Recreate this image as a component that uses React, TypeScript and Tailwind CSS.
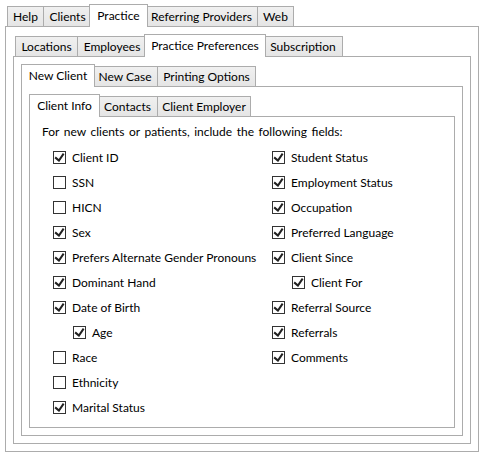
import React from "react";

type TabSpec = { label: string; w: string; sel?: boolean };

function Tabs({ tabs }: { tabs: TabSpec[] }) {
  const base =
    "flex items-center justify-center border-t border-l border-r border-[#ACACAC] text-black whitespace-nowrap shrink-0";
  return (
    <div className="flex items-end h-[22px] pl-[2px] shrink-0">
      {tabs.map((t, i) => {
        const first = i === 0;
        if (t.sel) {
          const m = first ? "ml-[-2px] mr-[-2px]" : "ml-[-3px] mr-[-2px]";
          return (
            <div key={t.label} className={`${base} ${t.w} ${m} h-[23px] -mb-px bg-white relative z-10`}>
              {t.label}
            </div>
          );
        }
        return (
          <div
            key={t.label}
            className={`${base} ${t.w} ${first ? "" : "-ml-px"} h-[20px] bg-linear-to-b from-[#F0F0F0] to-[#E5E5E5]`}
          >
            {t.label}
          </div>
        );
      })}
    </div>
  );
}

function TabControl({ tabs, children }: { tabs: TabSpec[]; children: React.ReactNode }) {
  return (
    <div className="flex flex-col flex-1 min-h-0">
      <Tabs tabs={tabs} />
      <div className="flex-1 min-h-0 flex flex-col border border-[#ACACAC] bg-white p-[7px]">{children}</div>
    </div>
  );
}

function Check({ checked }: { checked: boolean }) {
  return (
    <div className="w-[13px] h-[13px] border border-[#333333] bg-white shrink-0 flex items-center justify-center">
      {checked && (
        <svg width="11" height="11" viewBox="0 0 11 11">
          <path
            transform="translate(0.5 0.95)"
            d="M9.975 1.223L4.698 9.098L4.522 9.098L0 5.193L1.277 3.522L4.255 6.088L8.333 0L9.975 1.223Z"
            fill="#212121"
          />
        </svg>
      )}
    </div>
  );
}

type Row = [string, boolean, boolean];

const leftRows: Row[] = [
  ["Client ID", true, false],
  ["SSN", false, false],
  ["HICN", false, false],
  ["Sex", true, false],
  ["Prefers Alternate Gender Pronouns", true, false],
  ["Dominant Hand", true, false],
  ["Date of Birth", true, false],
  ["Age", true, true],
  ["Race", false, false],
  ["Ethnicity", false, false],
  ["Marital Status", true, false],
];

const rightRows: Row[] = [
  ["Student Status", true, false],
  ["Employment Status", true, false],
  ["Occupation", true, false],
  ["Preferred Language", true, false],
  ["Client Since", true, false],
  ["Client For", true, true],
  ["Referral Source", true, false],
  ["Referrals", true, false],
  ["Comments", true, false],
];

function CheckRow({ row }: { row: Row }) {
  const [label, checked, indent] = row;
  return (
    <div className={`flex items-center h-[25px] ${indent ? "pl-[20px]" : ""}`}>
      <Check checked={checked} />
      <span className="ml-[6px] whitespace-nowrap">{label}</span>
    </div>
  );
}

export default function App() {
  return (
    <div
      className="w-[484px] h-[455px] bg-white pt-[4px] pl-[5px] text-[12px] leading-[16px] text-black overflow-hidden"
      style={{ fontFamily: 'Lato, "Open Sans", sans-serif' }}
    >
      <div className="w-[474px] h-[448px] flex flex-col">
        <TabControl
          tabs={[
            { label: "Help", w: "w-[37px]" },
            { label: "Clients", w: "w-[49px]" },
            { label: "Practice", w: "w-[59px]", sel: true },
            { label: "Referring Providers", w: "w-[113px]" },
            { label: "Web", w: "w-[37px]" },
          ]}
        >
          <TabControl
            tabs={[
              { label: "Locations", w: "w-[63px]" },
              { label: "Employees", w: "w-[70px]" },
              { label: "Practice Preferences", w: "w-[122px]", sel: true },
              { label: "Subscription", w: "w-[80px]" },
            ]}
          >
            <TabControl
              tabs={[
                { label: "New Client", w: "w-[74px]", sel: true },
                { label: "New Case", w: "w-[66px]" },
                { label: "Printing Options", w: "w-[99px]" },
              ]}
            >
              <TabControl
                tabs={[
                  { label: "Client Info", w: "w-[71px]", sel: true },
                  { label: "Contacts", w: "w-[61px]" },
                  { label: "Client Employer", w: "w-[94px]" },
                ]}
              >
                <div className="pl-[5px]">
                  <div className="whitespace-nowrap [word-spacing:1.5px]">
                    For new clients or patients, include the following fields:
                  </div>
                  <div className="flex mt-[5px] ml-[11px]">
                    <div className="w-[219px] flex flex-col">
                      {leftRows.map((r) => (
                        <CheckRow key={r[0]} row={r} />
                      ))}
                    </div>
                    <div className="flex flex-col">
                      {rightRows.map((r) => (
                        <CheckRow key={r[0]} row={r} />
                      ))}
                    </div>
                  </div>
                </div>
              </TabControl>
            </TabControl>
          </TabControl>
        </TabControl>
      </div>
    </div>
  );
}
